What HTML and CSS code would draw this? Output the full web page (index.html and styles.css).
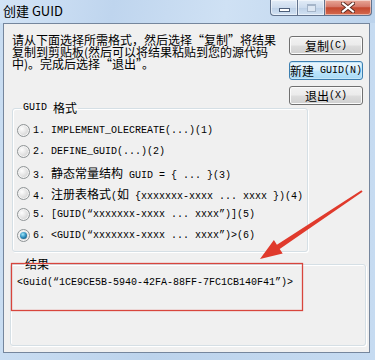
FILE: index.html
```html
<!DOCTYPE html>
<html lang="zh-CN">
<head>
  <meta charset="UTF-8" />
  <title>创建 GUID</title>
  <link rel="stylesheet" href="styles.css">
</head>
<body>
  <div class="window">
    <header class="titlebar">
      <span class="title">创建 GUID</span>
      <div class="caps">
        <div class="cap cap-min"><span class="min-glyph"></span></div>
        <div class="cap cap-max"><span class="max-glyph"></span></div>
        <div class="cap cap-close">
          <svg width="14" height="11" viewBox="0 0 14 11">
            <path d="M2 1.5 L12 9.5 M12 1.5 L2 9.5" stroke="#5a2a20" stroke-width="4" stroke-linecap="square"/>
            <path d="M2 1.5 L12 9.5 M12 1.5 L2 9.5" stroke="#fff" stroke-width="2.2" stroke-linecap="square"/>
          </svg>
        </div>
      </div>
    </header>

    <div class="client">
      <div class="top">
        <p class="intro">请从下面选择所需格式，然后选择“复制”将结果<br>复制到剪贴板(然后可以将结果粘贴到您的源代码<br>中)。完成后选择“退出”。</p>
        <div class="btns">
          <button class="btn"><span class="cjk">复制</span><span class="mono">(C)</span></button>
          <button class="btn focus"><span class="cjk">新建</span><span class="mono"> GUID(N)</span></button>
          <button class="btn"><span class="cjk">退出</span><span class="mono">(X)</span></button>
        </div>
      </div>

      <fieldset class="group formats">
        <legend><span class="mono">GUID </span><span class="cjk">格式</span></legend>
        <label class="opt"><span class="radio"></span><span class="mono">1. IMPLEMENT_OLECREATE(...)(1)</span></label>
        <label class="opt"><span class="radio"></span><span class="mono">2. DEFINE_GUID(...)(2)</span></label>
        <label class="opt"><span class="radio"></span><span class="mono">3. <span class="cjk">静态常量结构</span> GUID = { ... }(3)</span></label>
        <label class="opt"><span class="radio"></span><span class="mono">4. <span class="cjk">注册表格式</span>(<span class="cjk">如</span> {xxxxxxx-xxxx ... xxxx })(4)</span></label>
        <label class="opt"><span class="radio"></span><span class="mono">5. [GUID(“xxxxxxx-xxxx ... xxxx”)](5)</span></label>
        <label class="opt"><span class="radio checked"></span><span class="mono">6. &lt;GUID(“xxxxxxx-xxxx ... xxxx”)&gt;(6)</span></label>
      </fieldset>

      <fieldset class="group result">
        <legend><span class="cjk">结果</span></legend>
        <div class="guid mono">&lt;Guid(“1CE9CE5B-5940-42FA-88FF-7FC1CB140F41”)&gt;</div>
      </fieldset>
    </div>

    <!-- annotation drawn over the screenshot -->
    <svg class="annot" width="375" height="360" viewBox="0 0 375 360">
      <rect x="11.5" y="263.5" width="291" height="47" fill="none" stroke="#d8453c" stroke-width="1.3"/>
      <polygon points="260,259 282.7,253.5 279.7,248.9 362.6,191.8 361.4,190.2 276.9,244.7 273.9,240.1" fill="#e03a2c"/>
    </svg>
  </div>
</body>
</html>
```

FILE: styles.css
```css
body {
  margin: 0;
  width: 375px;
  height: 360px;
  overflow: hidden;
  font-family: "Noto Sans CJK SC", sans-serif;
  color: #000;
}
.window {
  position: relative;
  width: 375px;
  height: 360px;
  display: flex;
  flex-direction: column;
  background: linear-gradient(90deg, #c9ddf2, #bcd3ec 40%, #c6dbf1);
}
.titlebar {
  height: 23px;
  display: flex;
  justify-content: space-between;
  align-items: flex-start;
  background: linear-gradient(100deg, #d3e4f6, #bfd5ee 30%, #cfe1f4 60%, #bcd3ec);
}
.title {
  font-size: 13px;
  line-height: 22px;
  margin-left: 3px;
}
.caps {
  display: flex;
  margin-right: 3px;
}
.cap {
  height: 15px;
  display: flex;
  align-items: center;
  justify-content: center;
  border: 1px solid #62738d;
  border-top: none;
  box-shadow: inset 0 0 0 1px rgba(255, 255, 255, 0.5);
}
.cap-min {
  width: 26px;
  border-right: none;
  border-radius: 0 0 0 4px;
  background: linear-gradient(#e2ecf7, #cddcee 50%, #bccfe6 51%, #d2e2f3);
}
.cap-max {
  width: 26px;
  border-right: none;
  background: linear-gradient(#e2ecf7, #cddcee 50%, #bccfe6 51%, #d2e2f3);
}
.cap-close {
  width: 46px;
  border-radius: 0 0 4px 0;
  background: linear-gradient(#e8a898, #d5796a 45%, #c4482f 52%, #d56a4e);
}
.min-glyph {
  width: 9px;
  height: 2px;
  margin-top: 5px;
  background: #fff;
  border: 1px solid #4d5f7a;
}
.max-glyph {
  width: 7px;
  height: 5px;
  border: 1px solid #a5b5c9;
  border-top-width: 2px;
  background: #dde7f3;
}
.client {
  flex: 1;
  margin: 0 5px 7px 3px;
  border: 1px solid #75869d;
  background: #f0f0f0;
  display: flex;
  flex-direction: column;
}
.mono {
  font-family: "Liberation Mono", monospace;
  font-size: 10px;
  white-space: pre;
}
.cjk {
  font-family: "Noto Sans CJK SC", sans-serif;
  font-size: 12px;
}
.top {
  height: 77px;
  display: flex;
}
.intro {
  margin: 10px 0 0 8px;
  width: 276px;
  font-size: 12px;
  line-height: 12px;
  white-space: nowrap;
}
.btns {
  margin: 12px 6px 0 auto;
  display: flex;
  flex-direction: column;
  gap: 6px;
}
.btn {
  width: 74px;
  height: 19px;
  padding: 0;
  display: flex;
  align-items: center;
  justify-content: center;
  border: 1px solid #707070;
  border-radius: 3px;
  background: linear-gradient(#f2f2f2, #ebebeb 48%, #dddddd 52%, #cfcfcf);
  box-shadow: inset 0 0 0 1px #fbfbfb;
  color: #000;
  line-height: 17px;
  white-space: nowrap;
  overflow: visible;
}
.btn.focus {
  border-color: #3c7fb1;
  background: linear-gradient(#eaf6fd, #d9f0fc 48%, #bee6fd 52%, #a7d9f5);
  box-shadow: inset 0 0 0 1px #c5e6f8;
}
.group {
  margin: 0;
  border: 1px solid #d5dfe5;
  border-radius: 3px;
  box-shadow: inset 1px 1px 0 #fff, 1px 1px 0 #fff;
}
.group legend {
  padding: 0 1px;
  line-height: 14px;
  height: 14px;
  display: flex;
  align-items: center;
}
.formats {
  margin-left: 8px;
  width: 296px;
  box-sizing: border-box;
  padding: 5px 0 5px 4px;
}
.formats legend {
  margin-left: 5px;
}
.opt {
  height: 21px;
  display: flex;
  align-items: center;
}
.radio {
  width: 11px;
  height: 11px;
  margin-right: 3px;
  border: 1px solid #8f9496;
  border-radius: 50%;
  background: radial-gradient(circle at 35% 35%, #fdfdfd, #dcdcdc 60%, #c4c4c4);
  box-shadow: inset 0 0 0 1px #f4f4f4;
  display: flex;
  align-items: center;
  justify-content: center;
}
.radio.checked::after {
  content: "";
  width: 7px;
  height: 7px;
  border-radius: 50%;
  background: radial-gradient(circle at 40% 35%, #9ee8fb, #2d8cbd 50%, #0f4563);
}
.result {
  margin: 5px 0 0 6px;
  width: 356px;
  height: 89px;
  box-sizing: border-box;
  padding: 5px 0 0 6px;
}
.result legend {
  margin-left: 7px;
}
.guid {
  line-height: 14px;
}
.annot {
  position: absolute;
  top: 0;
  left: 0;
  pointer-events: none;
}
```
